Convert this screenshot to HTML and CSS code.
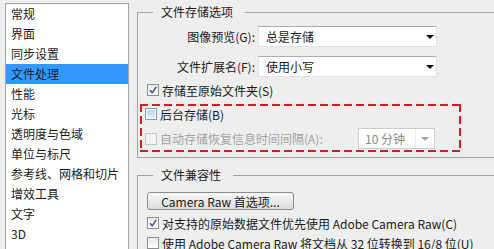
FILE: index.html
```html
<!DOCTYPE html>
<html lang="zh-CN">
<head>
<meta charset="utf-8">
<link rel="stylesheet" href="styles.css">
</head>
<body>
<div class="app">
  <ul class="nav">
    <li>常规</li>
    <li>界面</li>
    <li>同步设置</li>
    <li class="sel">文件处理</li>
    <li>性能</li>
    <li>光标</li>
    <li>透明度与色域</li>
    <li>单位与标尺</li>
    <li>参考线、网格和切片</li>
    <li>增效工具</li>
    <li>文字</li>
    <li>3D</li>
  </ul>
  <div class="main">
    <fieldset class="group g1">
      <legend>文件存储选项</legend>
      <div class="row">
        <span class="lbl">图像预览(G):</span>
        <div class="select"><span>总是存储</span><i class="arrow"></i></div>
      </div>
      <div class="row r2">
        <span class="lbl">文件扩展名(F):</span>
        <div class="select"><span>使用小写</span><i class="arrow"></i></div>
      </div>
      <div class="check c1">
        <span class="cb"><svg viewBox="0 0 10 10" width="10" height="10"><path d="M2 5.2 L4.2 7.8 L8.2 1.8" fill="none" stroke="#3d4f93" stroke-width="1.5"/></svg></span>
        <span>存储至原始文件夹(S)</span>
      </div>
      <div class="dash">
        <div class="check c2">
          <span class="cb hover"></span>
          <span>后台存储(B)</span>
        </div>
        <div class="row r3">
          <div class="check off">
            <span class="cb dis"></span>
            <span>自动存储恢复信息时间间隔(A):</span>
          </div>
          <div class="select dsel"><span class="field">10 分钟</span><i class="arrow garrow"></i></div>
        </div>
      </div>
    </fieldset>
    <fieldset class="group g2">
      <legend>文件兼容性</legend>
      <div class="btn">Camera Raw 首选项...</div>
      <div class="check c3">
        <span class="cb"><svg viewBox="0 0 10 10" width="10" height="10"><path d="M2 5.2 L4.2 7.8 L8.2 1.8" fill="none" stroke="#3d4f93" stroke-width="1.5"/></svg></span>
        <span>对支持的原始数据文件优先使用 Adobe Camera Raw(C)</span>
      </div>
      <div class="check c4">
        <span class="cb"></span>
        <span>使用 Adobe Camera Raw 将文档从 32 位转换到 16/8 位(U)</span>
      </div>
    </fieldset>
  </div>
</div>
</body>
</html>
```

FILE: styles.css
```css
* { box-sizing: border-box; }
html, body { margin: 0; padding: 0; }
body {
  width: 494px;
  height: 249px;
  overflow: hidden;
  background: #eeeeee;
  font-family: "Noto Sans CJK SC", "Noto Sans", sans-serif;
  font-size: 12px;
  color: #1b1b1b;
}
.app { display: flex; height: 249px; }

.nav {
  list-style: none;
  margin: 3px 0 0 5px;
  padding: 0;
  width: 124px;
  flex: none;
  background: #fff;
  border: 1px solid #a5a5a5;
  border-bottom: none;
}
.nav li {
  height: 20px;
  line-height: 20px;
  padding-left: 5px;
  white-space: nowrap;
}
.nav li.sel { background: #3399ff; }

.main { margin-left: 8px; flex: 1; min-width: 0; }

.group {
  margin: 4px -20px 0 0;
  padding: 6px 0 5px 0;
  border: 1px solid #a3a3a3;
  min-width: 0;
}
.group legend {
  margin-left: 15px;
  padding: 0 12px 0 8px;
  line-height: 16px;
  height: 16px;
}

.row { display: flex; align-items: center; height: 21px; }
.r2 { margin-top: 9px; }
.lbl {
  width: 120px;
  padding-right: 3px;
  text-align: right;
  white-space: nowrap;
}
.select {
  width: 179px;
  height: 21px;
  background: #fff;
  border: 1px solid #e2e2e2;
  border-top-color: #acacac;
  display: flex;
  align-items: center;
  padding-left: 7px;
}
.arrow {
  margin-left: auto;
  margin-right: 2px;
  width: 0;
  height: 0;
  border-left: 4px solid transparent;
  border-right: 4px solid transparent;
  border-top: 4px solid #111;
}

.check {
  display: flex;
  align-items: center;
  height: 16px;
  margin-left: 9px;
  gap: 3px;
  white-space: nowrap;
}
.c1 { margin-top: 5px; }
.cb {
  width: 12px;
  height: 12px;
  flex: none;
  border: 1px solid #8e8f8f;
  background: linear-gradient(#e8e8e8, #ffffff);
  display: flex;
  align-items: center;
  justify-content: center;
}
.cb.hover {
  border-color: #8a9aab;
  background: linear-gradient(#b9d6ee, #e3f0fb);
  box-shadow: inset 0 0 0 1px #f3f9fe;
}
.cb.dis {
  border-color: #c6c6c6;
  background: #f3f3f3;
}

.dash {
  margin: 6px 0 0 2px;
  width: 321px;
  padding: 2px 2px 3px 5px;
  background:
    repeating-linear-gradient(90deg, #da1a22 0 8px, transparent 8px 12px) top left / 100% 2px no-repeat,
    repeating-linear-gradient(90deg, #da1a22 0 8px, transparent 8px 12px) bottom left / 100% 2px no-repeat,
    repeating-linear-gradient(180deg, #da1a22 0 8px, transparent 8px 12px) top left / 2px 100% no-repeat,
    repeating-linear-gradient(180deg, #da1a22 0 8px, transparent 8px 12px) top right / 2px 100% no-repeat;
}
.dash .check { margin-left: 0; }
.r3 { margin-top: 6px; }
.off { width: 213px; color: #a3a3a3; }
.dsel {
  width: 77px;
  border: 1px solid #cdcdcd;
  padding-left: 0;
  color: #8a8a8a;
}
.field {
  width: 57px;
  height: 19px;
  line-height: 19px;
  padding-left: 6px;
  border-right: 1px solid #ececec;
}
.garrow {
  margin-right: 5px;
  border-top-color: #a9a9a9;
}

.g2 { margin-top: 9px; padding: 9px 0 0 0; }
.btn {
  margin-left: 9px;
  width: 147px;
  height: 18px;
  border: 1px solid #8d8d8d;
  border-radius: 3px;
  background: linear-gradient(#f7f7f7, #dcdcdc);
  display: flex;
  align-items: center;
  justify-content: center;
  white-space: nowrap;
}
.c3 { margin-top: 5px; }
.c4 { margin-top: 4px; }
```
